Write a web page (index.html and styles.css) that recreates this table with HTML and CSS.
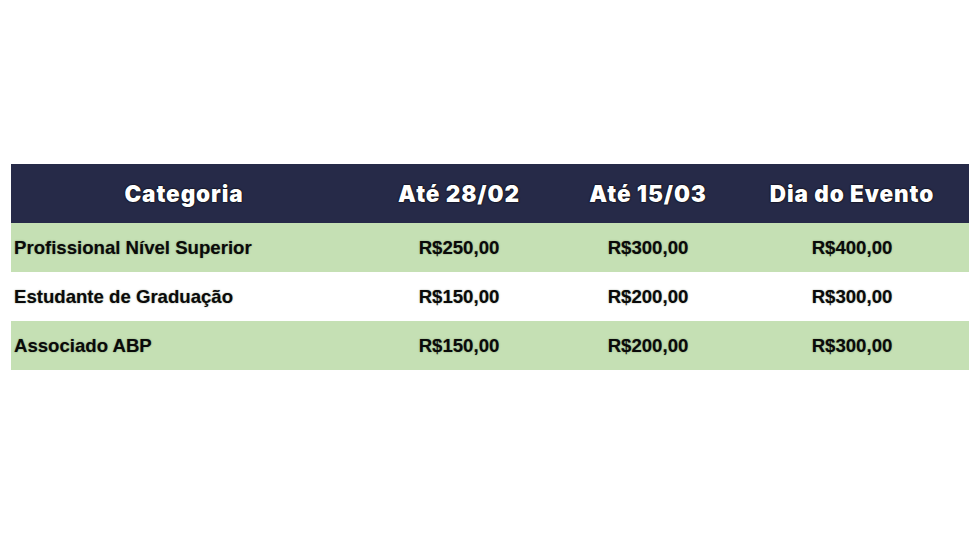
FILE: index.html
```html
<!DOCTYPE html>
<html lang="pt-BR">
<head>
<meta charset="utf-8">
<link rel="stylesheet" href="styles.css">
</head>
<body>
<div class="page">
  <table class="prices">
    <thead>
      <tr>
        <th class="c1">Categoria</th>
        <th class="c2">Até 28/02</th>
        <th class="c3">Até 15/03</th>
        <th class="c4">Dia do Evento</th>
      </tr>
    </thead>
    <tbody>
      <tr class="green">
        <td class="cat">Profissional Nível Superior</td>
        <td>R$250,00</td>
        <td>R$300,00</td>
        <td>R$400,00</td>
      </tr>
      <tr class="white">
        <td class="cat">Estudante de Graduação</td>
        <td>R$150,00</td>
        <td>R$200,00</td>
        <td>R$300,00</td>
      </tr>
      <tr class="green">
        <td class="cat">Associado ABP</td>
        <td>R$150,00</td>
        <td>R$200,00</td>
        <td>R$300,00</td>
      </tr>
    </tbody>
  </table>
</div>
</body>
</html>
```

FILE: styles.css
```css
html, body {
  margin: 0;
  padding: 0;
  background: #ffffff;
}
.page {
  width: 980px;
  height: 535px;
  padding: 164px 0 0 11px;
  box-sizing: border-box;
}
.prices {
  border-collapse: collapse;
  width: 958px;
  table-layout: fixed;
}
.prices th {
  background: #262a48;
  color: #ffffff;
  height: 59px;
  padding: 0;
  font-family: Inter, "Open Sans", sans-serif;
  font-weight: 900;
  font-size: 22.5px;
  letter-spacing: 0.9px;
  text-align: center;
  text-shadow: 0 0 2px #000000, 0 0 1px #000000;
}
.c1 { width: 346px; }
.c2 { width: 204px; }
.c3 { width: 174px; }
.c4 { width: 234px; }
.prices td {
  height: 49px;
  padding: 0;
  font-family: "Liberation Sans", Arial, sans-serif;
  font-weight: 700;
  font-size: 18.6px;
  color: #0a0a0a;
  text-align: center;
  text-shadow: 0 0 1.5px rgba(40, 60, 30, 0.55);
}
.prices td.cat {
  text-align: left;
  padding-left: 3px;
}
.green td {
  background: #c5e0b4;
}
.white td {
  background: #ffffff;
}
```
